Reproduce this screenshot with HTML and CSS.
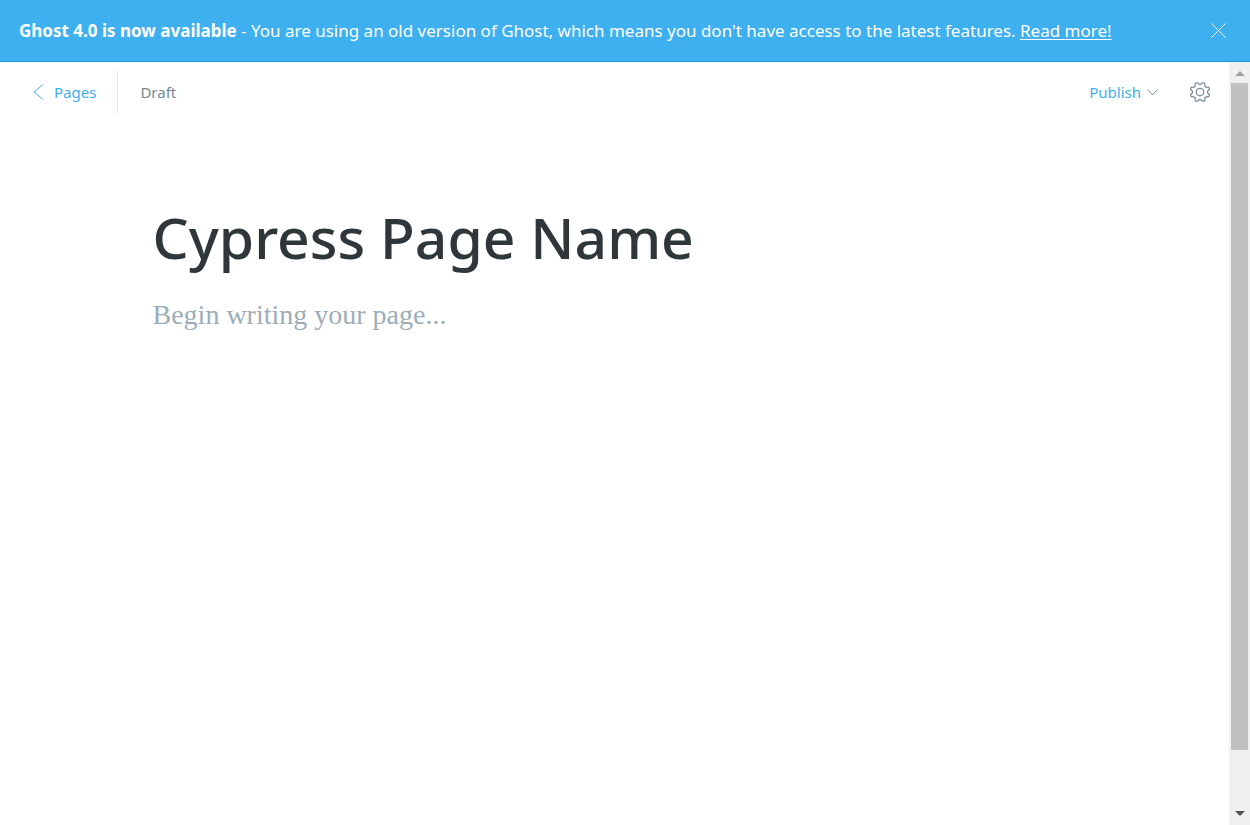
FILE: index.html
```
<!DOCTYPE html>
<html lang="en">
<head>
<meta charset="utf-8">
<meta name="viewport" content="width=device-width, initial-scale=1">
<title>Cypress Page Name</title>
<link rel="stylesheet" href="styles.css">
</head>
<body>
<div class="app">
  <aside class="banner">
    <p class="banner-text"><strong>Ghost 4.0 is now available</strong> - You are using an old version of Ghost, which means you don't have access to the latest features. <a href="#">Read more!</a></p>
    <button class="banner-close" type="button" aria-label="Close">
      <svg width="15" height="15" viewBox="0 0 15 15"><path d="M.5.5l14 14M14.5.5l-14 14"/></svg>
    </button>
  </aside>
  <div class="viewport">
    <main class="editor">
      <header class="toolbar">
        <a class="back" href="#">
          <svg width="10" height="16" viewBox="0 0 10 16"><path d="M9.500.8L1 8l8.500 7.200"/></svg>
          Pages
        </a>
        <span class="status">Draft</span>
        <button class="publish" type="button">
          Publish
          <svg width="11" height="7" viewBox="0 0 11 7"><path d="M.5.5l5 5.500 5-5.500"/></svg>
        </button>
        <button class="settings" type="button" aria-label="Settings">
          <svg width="20" height="20" viewBox="0 0 24 24"><path d="M10.546 2.438a1.957 1.957 0 0 0 2.908 0L14.400 1.400a1.959 1.959 0 0 1 3.410 1.413l-.071 1.400A1.958 1.958 0 0 0 19.790 6.266l1.400-.071A1.959 1.959 0 0 1 22.600 9.600l-1.038.946a1.958 1.958 0 0 0 0 2.909l1.039.943a1.959 1.959 0 0 1-1.413 3.410l-1.400-.071a1.958 1.958 0 0 0-2.056 2.056l.071 1.400A1.959 1.959 0 0 1 14.400 22.600l-.941-1.041a1.959 1.959 0 0 0-2.908 0L9.600 22.600A1.959 1.959 0 0 1 6.192 21.190l.072-1.400a1.958 1.958 0 0 0-2.056-2.056l-1.400.071A1.958 1.958 0 0 1 1.400 14.400l1.041-.943a1.958 1.958 0 0 0 0-2.909L1.400 9.600A1.958 1.958 0 0 1 2.809 6.195l1.400.071A1.958 1.958 0 0 0 6.264 4.209l-.072-1.400A1.959 1.959 0 0 1 9.600 1.400Z" stroke-width="1.5"/><circle cx="12" cy="12" r="4.500" stroke-width="1.5"/></svg>
        </button>
      </header>
      <div class="page">
        <input class="title" type="text" aria-label="Page title" value="Cypress Page Name">
        <textarea class="content" aria-label="Page content" placeholder="Begin writing your page..."></textarea>
      </div>
    </main>
    <div class="scrollbar" aria-hidden="true">
      <svg class="arrow up" viewBox="0 0 21 21"><path d="M6 14h10l-5-5z"/></svg>
      <div class="track"><div class="thumb"></div></div>
      <svg class="arrow down" viewBox="0 0 21 21"><path d="M6 7h10l-5 5z"/></svg>
    </div>
  </div>
</div>
</body>
</html>
```
FILE: styles.css
```
* {
  box-sizing: border-box;
}

body {
  margin: 0;
  background: #fff;
  font-family: "Noto Sans", "Open Sans", sans-serif;
}

button {
  padding: 0;
  border: 0;
  background: none;
  font: inherit;
  cursor: pointer;
}

svg {
  display: block;
  flex: none;
  fill: none;
  stroke: currentColor;
}

.app {
  display: flex;
  flex-direction: column;
  height: 100vh;
}

.banner {
  display: flex;
  align-items: center;
  justify-content: space-between;
  gap: 24px;
  padding: 18px 24px 18px 19px;
  border-bottom: 1px solid #1998e0;
  background: #3eb0ef;
  color: #fff;
}

.banner-text {
  margin: 0;
  font-size: 17px;
  line-height: 25px;
}

.banner-text a {
  color: inherit;
  text-underline-offset: 2px;
}

.banner-close {
  color: #fff;
}

.viewport {
  display: flex;
  flex: 1;
  min-height: 0;
}

.editor {
  flex: 1;
  min-width: 0;
}

.toolbar {
  display: flex;
  align-items: center;
  height: 44px;
  margin-top: 8px;
  padding: 0 19px 0 33px;
  font-size: 15px;
  line-height: 20px;
}

.back {
  display: flex;
  align-items: center;
  gap: 11px;
  height: 44px;
  padding-right: 21px;
  border-right: 1px solid #dfe9f1;
  color: #3eb0ef;
  text-decoration: none;
}

.status {
  margin-left: 22px;
  color: #738a94;
}

.publish {
  display: flex;
  align-items: center;
  gap: 6px;
  margin-left: auto;
  color: #3eb0ef;
}

.publish svg {
  color: #738a94;
}

.settings {
  margin-left: 32px;
  color: #738a94;
}

.settings svg {
  overflow: visible;
}

.page {
  display: flex;
  flex-direction: column;
  max-width: 924px;
  margin: 0 auto;
  padding-top: 83px;
}

.title,
.content {
  width: 100%;
  padding: 0;
  border: 0;
  outline: 0;
  background: none;
}

.title {
  height: 80px;
  color: #2f373b;
  font-family: "Noto Sans", "Open Sans", sans-serif;
  font-size: 57px;
  font-weight: 500;
}

.content {
  height: 160px;
  margin-top: 18px;
  resize: none;
  font-family: "Liberation Serif", serif;
  font-size: 28px;
  line-height: 40px;
}

.content::placeholder {
  color: #9baeb8;
}

.scrollbar {
  display: flex;
  flex-direction: column;
  width: 21px;
  background: #f0f0f0;
}

.arrow {
  width: 21px;
  height: 21px;
  stroke: none;
}

.up {
  fill: #a0a0a0;
}

.down {
  fill: #505050;
}

.track {
  flex: 1;
  padding: 0 2px;
}

.thumb {
  height: 92.5%;
  background: #c1c1c1;
}
```
